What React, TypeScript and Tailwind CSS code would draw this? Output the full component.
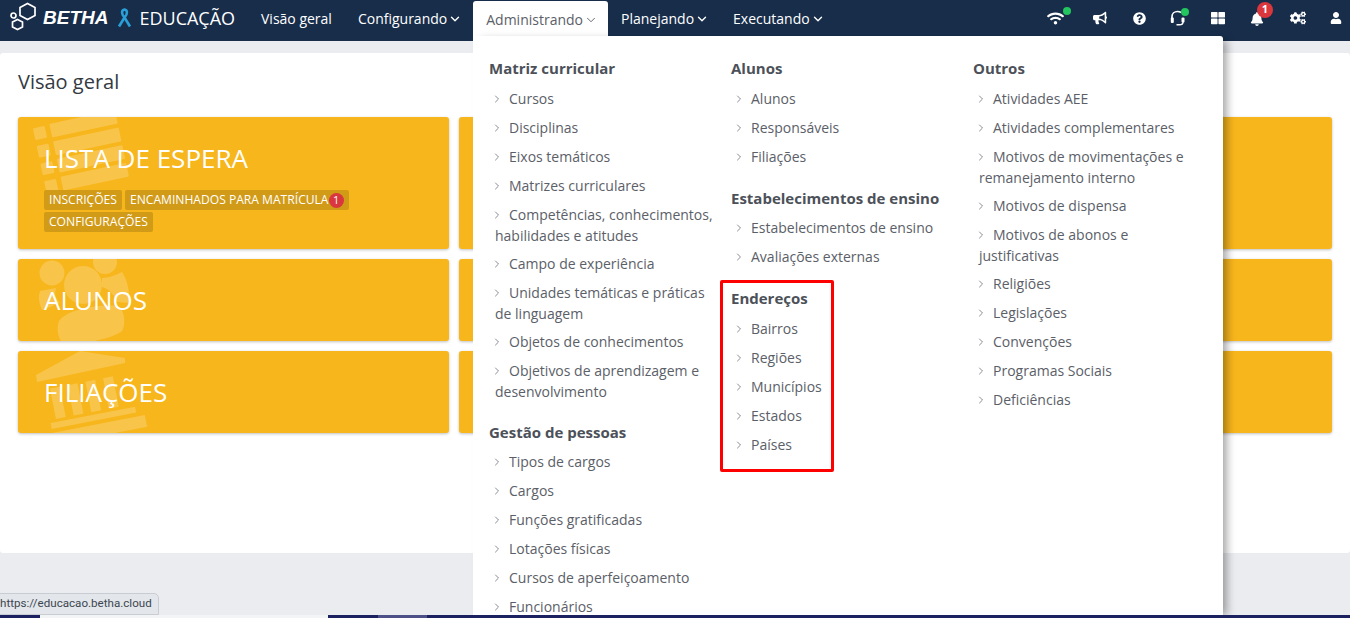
import type { ReactNode } from "react";
import { FaWifi, FaBullhorn, FaQuestionCircle, FaThLarge, FaBell, FaCogs, FaUser } from "react-icons/fa";
import { ChevronDown, ChevronRight } from "lucide-react";

const col1 = [
  { title: "Matriz curricular", items: ["Cursos", "Disciplinas", "Eixos temáticos", "Matrizes curriculares", "Competências, conhecimentos, habilidades e atitudes", "Campo de experiência", "Unidades temáticas e práticas de linguagem", "Objetos de conhecimentos", "Objetivos de aprendizagem e desenvolvimento"] },
  { title: "Gestão de pessoas", items: ["Tipos de cargos", "Cargos", "Funções gratificadas", "Lotações físicas", "Cursos de aperfeiçoamento", "Funcionários"] },
];
const col2 = [
  { title: "Alunos", items: ["Alunos", "Responsáveis", "Filiações"] },
  { title: "Estabelecimentos de ensino", items: ["Estabelecimentos de ensino", "Avaliações externas"] },
  { title: "Endereços", items: ["Bairros", "Regiões", "Municípios", "Estados", "Países"] },
];
const col3 = [
  { title: "Outros", items: ["Atividades AEE", "Atividades complementares", "Motivos de movimentações e remanejamento interno", "Motivos de dispensa", "Motivos de abonos e justificativas", "Religiões", "Legislações", "Convenções", "Programas Sociais", "Deficiências"] },
];

function Logo() {
  return (
    <svg width="28" height="32" viewBox="0 0 28 32" fill="none" stroke="white" strokeWidth="1.7" className="shrink-0">
      <path d="M17.5 1.5 L25 5.5 V13.5 L17.5 17.5 L10 13.5 V5.5 Z" />
      <path d="M7.5 17.5 L12.5 20 V25 L7.5 27.5 L2.5 25 V20 Z" />
      <circle cx="3.5" cy="13.5" r="2.5" />
    </svg>
  );
}

function Ribbon() {
  return (
    <svg width="15" height="20" viewBox="0 0 15 20" fill="none" stroke="#2a9fd8" strokeWidth="2.6" className="shrink-0">
      <path d="M7.5 9.5 C4 6 4.5 2 7.5 1.5 C10.5 2 11 6 7.5 9.5 Z" />
      <path d="M7.5 9.5 L2 18.5 M7.5 9.5 L13 18.5" />
    </svg>
  );
}

function Headset() {
  return (
    <svg width="16" height="16" viewBox="0 0 16 16" fill="none" stroke="white" className="shrink-0">
      <path d="M2 9 V6.5 C2 3.5 4.5 1.5 7.5 1.5 C9 1.5 10 1.8 11 2.5" strokeWidth="1.7" />
      <rect x="0.8" y="7.5" width="3" height="5.5" rx="1" fill="white" stroke="none" />
      <rect x="11.5" y="7.5" width="3" height="5" rx="1" fill="white" stroke="none" />
      <path d="M13 12 C13 14 11.5 14.8 9.5 14.8 H6.5" strokeWidth="1.4" />
    </svg>
  );
}

function NavItem({ label, caret = true, open = false }: { label: string; caret?: boolean; open?: boolean }) {
  return (
    <div className={"flex items-center gap-[3px] h-[36px] px-[13px] self-start text-[14px] " + (open ? "mt-[1px] h-[35px] pr-[12px] rounded-t-[3px] bg-white text-[#5b6068]" : "text-white")}>
      {label}
      {caret && <ChevronDown size={14} strokeWidth={open ? 1.6 : 2.4} className="-mx-[2px] mt-[1px]" />}
    </div>
  );
}

function Dot({ className }: { className: string }) {
  return <span className={"absolute w-[8px] h-[8px] rounded-full bg-[#22c55e] " + className} />;
}

function MenuGroup({ title, items }: { title: string; items: string[] }) {
  return (
    <div className="mb-[17px]">
      <h4 className="text-[15px] font-bold text-[#4c5159] leading-[20px] mb-[5.6px]">{title}</h4>
      {items.map((item) => (
        <div key={item} className="text-[14px] leading-[20px] text-[#5b6068] pl-[6px] pt-[5px] pb-[3px]">
          <span className="inline-block h-[21px] w-0 align-top" />
          <ChevronRight size={12} strokeWidth={1.6} className="inline -ml-[4px] mr-[6px] mb-[2px] text-[#6a6f76]" />
          {item}
        </div>
      ))}
    </div>
  );
}

function Tag({ children }: { children: ReactNode }) {
  return <span className="inline-flex items-center h-[20px] px-[5px] rounded-[2px] bg-[#d19b18] text-[12.1px] text-white">{children}</span>;
}

function Card({ title, icon, tall, children }: { title: string; icon?: ReactNode; tall?: boolean; children?: ReactNode }) {
  return (
    <div className={"relative overflow-hidden rounded-[3px] bg-[#f7b61c] shadow-[0_1px_3px_rgba(0,0,0,0.25)] text-white " + (tall ? "h-[132px] pl-[26px] pt-[23px]" : "h-[82px] pl-[26px] pt-[23px]")}>
      {icon}
      <div className="relative text-[26px] leading-[36px]">{title}</div>
      {children}
    </div>
  );
}

function ListMark() {
  return (
    <svg width="130" height="110" viewBox="0 0 130 110" fill="white" fillOpacity="0.2" className="absolute left-0 top-0">
      <g transform="rotate(-12 22 16)">
        {[0, 18, 36, 54].map((y) => (
          <g key={y}>
            <rect x="16" y={10 + y} width="12" height="12" rx="1" />
            <rect x="33" y={9 + y} width="67" height="14" rx="1" />
          </g>
        ))}
      </g>
    </svg>
  );
}

function UsersMark() {
  return (
    <svg width="130" height="82" viewBox="0 0 130 82" fill="white" fillOpacity="0.2" className="absolute left-0 top-0">
      <circle cx="65" cy="26" r="19" />
      <path d="M41 62 C50 50 80 45 100 47 C108 52 107 68 104 72 C98 78 70 84 48 88 C40 82 38 70 41 62 Z" />
      <circle cx="34" cy="14" r="12.5" />
      <path d="M22 32 L38 29 C36 36 38 40 42 44 C36 46 28 50 24 51 C21 44 20 38 22 32 Z" />
      <circle cx="87" cy="3" r="12" />
      <path d="M84 19 C90 19 98 16 104 13 C110 22 112 34 111 44 L99 43 C97 38 92 30 84 28 Z" />
    </svg>
  );
}

function BankMark() {
  return (
    <svg width="130" height="82" viewBox="0 0 130 82" fill="white" fillOpacity="0.2" className="absolute left-0 top-0">
      <path d="M18 24 L62 0 L107 7 L107 12 L19 31 Z" />
      <g transform="rotate(-11 62 45)">
        {[34, 52, 70, 88].map((x) => (
          <rect key={x} x={x} y="32" width="10" height="31" />
        ))}
        <rect x="28" y="66" width="86" height="6" />
        <rect x="22" y="76" width="100" height="12" />
      </g>
    </svg>
  );
}

export default function App() {
  return (
    <div className="relative h-[618px] w-[1350px] overflow-hidden bg-[#ebecf0] font-['Open_Sans',sans-serif]">
      <header className="flex h-[41px] items-start bg-[#172d4a]">
        <div className="flex items-center h-[36px] pl-[10px] w-[248px]">
          <Logo />
          <span className="ml-[5px] text-[19px] font-['Liberation_Sans',sans-serif] font-bold italic text-white">BETHA</span>
          <span className="ml-[9px]"><Ribbon /></span>
          <span className="ml-[7px] text-[18px] text-white">EDUCAÇÃO</span>
        </div>
        <NavItem label="Visão geral" caret={false} />
        <NavItem label="Configurando" />
        <NavItem label="Administrando" open />
        <NavItem label="Planejando" />
        <NavItem label="Executando" />
        <div className="ml-auto flex items-center h-[36px] pr-[4px] text-white text-[14px]">
          <div className="relative w-[20px] flex justify-center"><FaWifi size={17} className="mt-[1px]" /><Dot className="-top-[2px] right-[-6px]" /></div>
          <div className="ml-[25px] w-[20px] flex justify-center"><FaBullhorn size={14} /></div>
          <div className="ml-[19px] w-[20px] flex justify-center"><FaQuestionCircle size={13} /></div>
          <div className="relative ml-[19px] w-[20px] flex justify-center"><Headset /><Dot className="-top-[2px] right-[-1px]" /></div>
          <div className="ml-[20px] w-[20px] flex justify-center"><FaThLarge size={14} /></div>
          <div className="relative ml-[19px] w-[20px] flex justify-center">
            <FaBell size={14} className="mt-[1px]" />
            <span className="absolute -top-[9px] left-[10px] flex h-[16px] w-[16px] items-center justify-center rounded-full bg-[#d9363e] text-[11px] font-bold text-white">1</span>
          </div>
          <div className="ml-[21px] w-[20px] flex justify-center"><FaCogs size={16} /></div>
          <div className="ml-[18px] w-[20px] flex justify-center"><FaUser size={12} /></div>
        </div>
      </header>

      <main className="mt-[12px] h-[500px] rounded-[3px] bg-white px-[18px] pt-[15px]">
        <h1 className="text-[20px] leading-[27px] text-[#333a42]">Visão geral</h1>
        <div className="mt-[22px] grid grid-cols-[431px_431px_432px] gap-[10px]">
          <Card title="LISTA DE ESPERA" tall icon={<ListMark />}>
            <div className="relative mt-[14px] flex flex-wrap gap-x-[3px] gap-y-[2px] w-[330px]">
              <Tag>INSCRIÇÕES</Tag>
              <Tag>ENCAMINHADOS PARA MATRÍCULA<span className="flex h-[15px] w-[15px] items-center justify-center rounded-full bg-[#d9363e] text-[11px]">1</span></Tag>
              <Tag>CONFIGURAÇÕES</Tag>
            </div>
          </Card>
          <Card title="" tall />
          <Card title="" tall />
          <Card title="ALUNOS" icon={<UsersMark />} />
          <Card title="" />
          <Card title="" />
          <Card title="FILIAÇÕES" icon={<BankMark />} />
          <Card title="" />
          <Card title="" />
        </div>
      </main>

      <div className="absolute left-[473px] top-[36px] h-[579px] w-[750px] overflow-hidden rounded-tr-[3px] bg-white pl-[16px] pt-[22px] shadow-[6px_2px_8px_-2px_rgba(0,0,0,0.35)]">
        <div className="grid grid-cols-[242px_242px_236px]">
          <div className="pr-[8px]">{col1.map((g) => <MenuGroup key={g.title} {...g} />)}</div>
          <div className="pr-[8px]">{col2.map((g) => <MenuGroup key={g.title} {...g} />)}</div>
          <div className="pr-[8px]">{col3.map((g) => <MenuGroup key={g.title} {...g} />)}</div>
        </div>
      </div>
      <div className="absolute left-[720px] top-[280px] h-[192px] w-[114px] rounded-[2px] border-[3px] border-[#ff0000]" />

      <div className="absolute -left-[5px] bottom-[3px] flex h-[22px] w-[164px] items-center rounded-tr-[5px] border border-[#c9ccd2] bg-[#e3e6eb] pl-[4px] font-['Roboto',sans-serif] text-[11.6px] text-[#3c4650]">
        https://educacao.betha.cloud
      </div>
      <div className="absolute inset-x-0 bottom-0 flex h-[3px] bg-[#1c2260]">
        <div className="w-[40px]" />
        <div className="w-[288px] bg-[#f3f4f6]" />
        <div className="w-[50px]" />
        <div className="w-[49px] bg-[#4d5187]" />
      </div>
    </div>
  );
}
